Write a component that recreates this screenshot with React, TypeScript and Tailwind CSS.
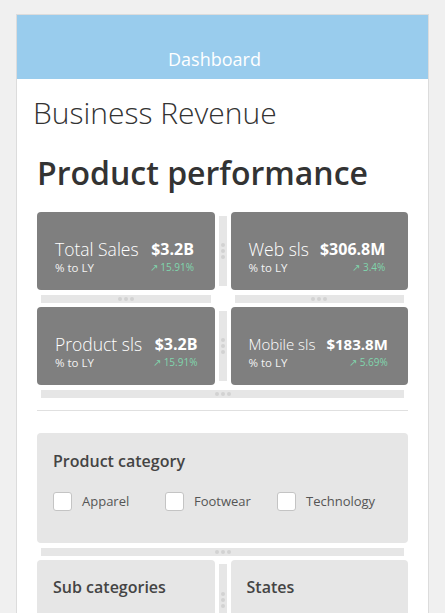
import React from 'react'

const font = { fontFamily: '"Open Sans", "Noto Sans", sans-serif' }

const Dots: React.FC<{ vertical?: boolean }> = ({ vertical }) => (
  <div className={`flex ${vertical ? 'flex-col' : 'flex-row'} gap-[2px]`}>
    {[0, 1, 2].map((i) => (
      <span key={i} className="w-[4px] h-[4px] rounded-full bg-[#d2d2d2]" />
    ))}
  </div>
)

const HSplitter: React.FC = () => (
  <div className="mx-[4px] mt-[5px] mb-[4px] h-[8px] bg-[#e6e6e6] flex items-center justify-center">
    <Dots />
  </div>
)

const VSplitter: React.FC = () => (
  <div className="w-[16px] shrink-0 px-[4px] py-[4px] flex">
    <div className="w-[8px] bg-[#e6e6e6] flex items-center justify-center">
      <Dots vertical />
    </div>
  </div>
)

interface KpiProps {
  title: string
  value: string
  change: string
  small?: boolean
}

const KpiCard: React.FC<KpiProps> = ({ title, value, change, small }) => (
  <div className="w-full h-[78px] shrink-0 rounded-[4px] bg-[#7f7f7f] flex items-center px-[18px] pt-[12px] text-white">
    <div className="flex items-start gap-[11px]">
      <div className="flex flex-col gap-[1px]">
        <span className={`${small ? 'text-[15px]' : 'text-[17.5px]'} font-light leading-[21px] whitespace-nowrap`}>
          {title}
        </span>
        <span className="text-[11.5px] leading-[14px] text-[#f2f2f2]">% to LY</span>
      </div>
      <div className="flex flex-col items-end gap-[1px]">
        <span className={`${small ? 'text-[15px]' : 'text-[16px]'} font-bold leading-[21px] whitespace-nowrap`}>
          {value}
        </span>
        <span className="text-[10px] leading-[13px] text-[#7fd6ad] whitespace-nowrap">↗ {change}</span>
      </div>
    </div>
  </div>
)

const Checkbox: React.FC<{ label: string }> = ({ label }) => (
  <label className="w-[112px] flex items-center gap-[10px]">
    <span className="w-[19px] h-[19px] rounded-[3px] border border-[#c4c4c4] bg-white" />
    <span className="text-[13px] text-[#555]">{label}</span>
  </label>
)

const App: React.FC = () => {
  return (
    <div className="min-h-[613px] bg-[#f0f0f0] pt-[14px] px-[16px] overflow-hidden" style={font}>
      <div className="bg-white border border-[#dcdcdc] border-b-0 h-[600px]">
        {/* Header */}
        <div className="h-[64px] bg-[#99cced] flex items-end justify-center pb-[8px] pr-[16px]">
          <span className="text-[18px] text-white leading-[24px]">Dashboard</span>
        </div>

        <h1 className="pl-[16px] pt-[14px] text-[30px] font-light text-[#333] leading-[40px]">
          Business Revenue
        </h1>

        <div className="px-[20px]">
          <h2 className="pt-[20px] pb-[19px] text-[32px] font-semibold text-[#333] leading-[40px]">
            Product performance
          </h2>

          {/* KPI row 1 */}
          <div className="flex">
            <div className="flex-1 min-w-0 flex flex-col">
              <KpiCard title="Total Sales" value="$3.2B" change="15.91%" />
              <HSplitter />
            </div>
            <div className="h-[78px] flex">
              <VSplitter />
            </div>
            <div className="flex-1 min-w-0 flex flex-col">
              <KpiCard title="Web sls" value="$306.8M" change="3.4%" />
              <HSplitter />
            </div>
          </div>

          {/* KPI row 2 */}
          <div className="flex">
            <div className="flex-1 min-w-0">
              <KpiCard title="Product sls" value="$3.2B" change="15.91%" />
            </div>
            <VSplitter />
            <div className="flex-1 min-w-0">
              <KpiCard title="Mobile sls" value="$183.8M" change="5.69%" small />
            </div>
          </div>
          <HSplitter />

          <div className="mt-[12px] border-t border-[#e0e0e0]" />

          {/* Product category */}
          <div className="mt-[22px] h-[110px] rounded-[4px] bg-[#e6e6e6] px-[16px] pt-[16px]">
            <h3 className="text-[16px] font-semibold text-[#444] leading-[24px]">Product category</h3>
            <div className="mt-[19px] flex">
              <Checkbox label="Apparel" />
              <Checkbox label="Footwear" />
              <Checkbox label="Technology" />
            </div>
          </div>
          <HSplitter />

          <div className="flex">
            <div className="flex-1 min-w-0 h-[80px] rounded-[4px] bg-[#e6e6e6] px-[16px] pt-[15px]">
              <h3 className="text-[16px] font-semibold text-[#444] leading-[24px]">Sub categories</h3>
            </div>
            <VSplitter />
            <div className="flex-1 min-w-0 h-[80px] rounded-[4px] bg-[#e6e6e6] px-[16px] pt-[15px]">
              <h3 className="text-[16px] font-semibold text-[#444] leading-[24px]">States</h3>
            </div>
          </div>
        </div>
      </div>
    </div>
  )
}

export default App
